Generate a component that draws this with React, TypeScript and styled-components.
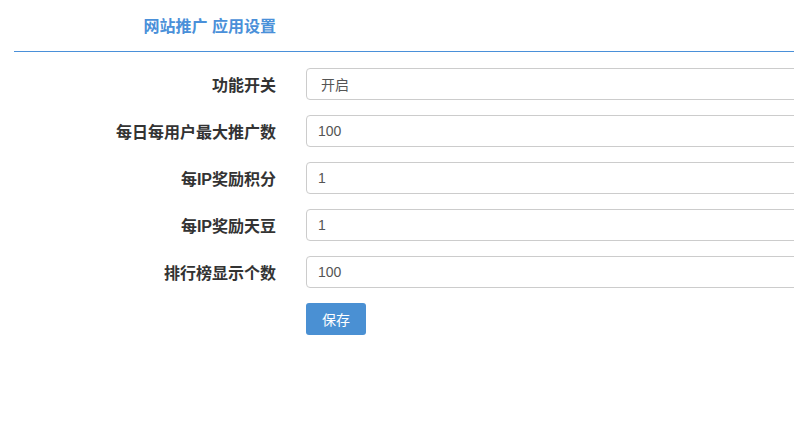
import React from "react";
import styled, { createGlobalStyle } from "styled-components";

const GlobalStyle = createGlobalStyle`
  html, body {
    margin: 0;
    padding: 0;
    background: #fff;
    overflow: hidden;
  }
  body {
    font-family: "Liberation Sans", "Noto Sans CJK SC", sans-serif;
    font-size: 14px;
    color: #333;
  }
`;

const Page = styled.div`
  width: 794px;
  height: 443px;
  overflow: hidden;
  padding-left: 14px;
  box-sizing: border-box;
`;

const Header = styled.div`
  display: flex;
  height: 51px;
  align-items: center;
`;

const Divider = styled.div`
  height: 1px;
  background-color: #4a90d9;
`;

const Title = styled.h3`
  margin: 0;
  width: 262px;
  text-align: right;
  font-size: 16px;
  font-weight: bold;
  color: #4a90d9;
  padding-bottom: 1px;
`;

const Form = styled.form`
  display: flex;
  flex-direction: column;
  gap: 15px;
  padding-top: 16px;
`;

const Row = styled.div`
  display: flex;
  align-items: center;
  gap: 30px;
`;

const Label = styled.label`
  width: 262px;
  flex-shrink: 0;
  text-align: right;
  font-weight: bold;
  font-size: 16px;
  color: #333;
`;

const Input = styled.input<{ $pad?: number }>`
  width: 620px;
  flex-shrink: 0;
  height: 32px;
  box-sizing: border-box;
  border: 1px solid #ccc;
  border-radius: 4px;
  padding: 0 ${(p) => p.$pad ?? 11}px;
  font-family: "Liberation Sans", "Noto Sans CJK SC", sans-serif;
  font-size: 14px;
  color: #555;
  outline: none;
`;

const Spacer = styled.div`
  width: 262px;
  flex-shrink: 0;
`;

const SaveButton = styled.button`
  width: 60px;
  height: 32px;
  border: none;
  border-radius: 3px;
  background: #4a90d3;
  color: #fff;
  font-family: "Liberation Sans", "Noto Sans CJK SC", sans-serif;
  font-size: 14px;
  cursor: pointer;
`;

const fields = [
  { label: "功能开关", value: "开启", pad: 14 },
  { label: "每日每用户最大推广数", value: "100" },
  { label: "每IP奖励积分", value: "1" },
  { label: "每IP奖励天豆", value: "1" },
  { label: "排行榜显示个数", value: "100" },
];

const App: React.FC = () => {
  return (
    <>
      <GlobalStyle />
      <Page>
        <Header>
          <Title>网站推广 应用设置</Title>
        </Header>
        <Divider />
        <Form onSubmit={(e) => e.preventDefault()}>
          {fields.map((f) => (
            <Row key={f.label}>
              <Label>{f.label}</Label>
              <Input defaultValue={f.value} $pad={f.pad} />
            </Row>
          ))}
          <Row>
            <Spacer />
            <SaveButton type="submit">保存</SaveButton>
          </Row>
        </Form>
      </Page>
    </>
  );
};

export default App;
